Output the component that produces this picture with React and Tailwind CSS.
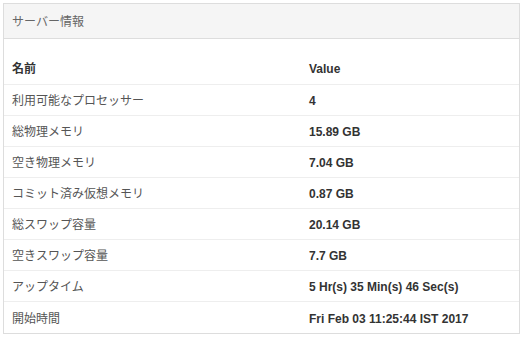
const rows = [
  ['利用可能なプロセッサー', '4'],
  ['総物理メモリ', '15.89 GB'],
  ['空き物理メモリ', '7.04 GB'],
  ['コミット済み仮想メモリ', '0.87 GB'],
  ['総スワップ容量', '20.14 GB'],
  ['空きスワップ容量', '7.7 GB'],
  ['アップタイム', '5 Hr(s) 35 Min(s) 46 Sec(s)'],
  ['開始時間', 'Fri Feb 03 11:25:44 IST 2017'],
];

export default function App() {
  return (
    <div
      className="w-[526px] h-[341px] bg-white pt-[3px] pl-[3px]"
      style={{ fontFamily: '"Liberation Sans", "Noto Sans CJK JP", sans-serif' }}
    >
      {/* Server info panel */}
      <div className="w-[517px] border border-[#dddddd] text-[12px]">
        <div className="h-[35px] flex items-center pt-[2px] px-2 bg-[#f5f5f5] border-b border-[#dddddd] text-[#666666]">
          サーバー情報
        </div>
        <div className="h-[46px] flex items-end pb-[6px] border-b border-[#eeeeee] font-bold text-[#333333]">
          <div className="w-[297px] px-2">名前</div>
          <div className="flex-1 px-2">Value</div>
        </div>
        {rows.map(([label, value], i) => (
          <div
            key={label}
            className={`h-[31px] flex items-center pt-[2px] ${i < rows.length - 1 ? 'border-b border-[#eeeeee]' : ''}`}
          >
            <div className="w-[297px] px-2 text-[#555555]">{label}</div>
            <div className="flex-1 px-2 font-bold text-[#333333]">{value}</div>
          </div>
        ))}
      </div>
    </div>
  );
}
